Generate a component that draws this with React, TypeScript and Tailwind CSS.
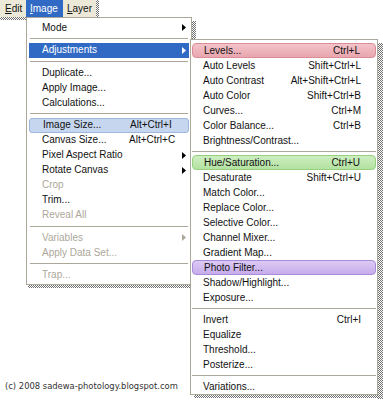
import React from "react";

type Row =
  | "sep"
  | {
      label: string;
      shortcut?: string;
      arrow?: boolean;
      disabled?: boolean;
      hl?: "blue" | "light" | "pink" | "green" | "purple";
    };

const menu1: Row[] = [
  { label: "Mode", arrow: true },
  "sep",
  { label: "Adjustments", arrow: true, hl: "blue" },
  "sep",
  { label: "Duplicate..." },
  { label: "Apply Image..." },
  { label: "Calculations..." },
  "sep",
  { label: "Image Size...", shortcut: "Alt+Ctrl+I", hl: "light" },
  { label: "Canvas Size...", shortcut: "Alt+Ctrl+C" },
  { label: "Pixel Aspect Ratio", arrow: true },
  { label: "Rotate Canvas", arrow: true },
  { label: "Crop", disabled: true },
  { label: "Trim..." },
  { label: "Reveal All", disabled: true },
  "sep",
  { label: "Variables", arrow: true, disabled: true },
  { label: "Apply Data Set...", disabled: true },
  "sep",
  { label: "Trap...", disabled: true },
];

const menu2: Row[] = [
  { label: "Levels...", shortcut: "Ctrl+L", hl: "pink" },
  { label: "Auto Levels", shortcut: "Shift+Ctrl+L" },
  { label: "Auto Contrast", shortcut: "Alt+Shift+Ctrl+L" },
  { label: "Auto Color", shortcut: "Shift+Ctrl+B" },
  { label: "Curves...", shortcut: "Ctrl+M" },
  { label: "Color Balance...", shortcut: "Ctrl+B" },
  { label: "Brightness/Contrast..." },
  "sep",
  { label: "Hue/Saturation...", shortcut: "Ctrl+U", hl: "green" },
  { label: "Desaturate", shortcut: "Shift+Ctrl+U" },
  { label: "Match Color..." },
  { label: "Replace Color..." },
  { label: "Selective Color..." },
  { label: "Channel Mixer..." },
  { label: "Gradient Map..." },
  { label: "Photo Filter...", hl: "purple" },
  { label: "Shadow/Highlight..." },
  { label: "Exposure..." },
  "sep",
  { label: "Invert", shortcut: "Ctrl+I" },
  { label: "Equalize" },
  { label: "Threshold..." },
  { label: "Posterize..." },
  "sep",
  { label: "Variations..." },
];

const hlClass: Record<string, string> = {
  blue: "bg-[#316ac5] text-white",
  light: "bg-[#c6d6ee] border border-[#9db7dd] rounded-[3px]",
  pink: "bg-[linear-gradient(#f3c3c9,#e9a6ae)] border border-[#d98d97] rounded-[4px]",
  green: "bg-[linear-gradient(#cdeec0,#b3e2a1)] border border-[#96d07f] rounded-[4px]",
  purple: "bg-[linear-gradient(#dccaf4,#c6acec)] border border-[#a98bd9] rounded-[4px]",
};

const checker =
  "bg-[image:repeating-conic-gradient(#6f6f6f_0%_25%,#ffffff_0%_50%)] bg-[length:2px_2px]";

function Arrow({ color }: { color: string }) {
  return (
    <svg width="4" height="7" viewBox="0 0 4 7" className="ml-auto shrink-0">
      <polygon points="0,0 4,3.5 0,7" fill={color} />
    </svg>
  );
}

function Menu1() {
  return (
    <div className="absolute left-[26px] top-[17px] w-[166px] bg-white border border-[#aca899] pt-[2px] pb-[1px]">
      <div className={`absolute -right-[5px] top-[3px] w-[4px] h-[22px] ${checker}`} />
      <div className={`absolute left-[1px] -bottom-[4px] w-[163px] h-[3px] ${checker}`} />
      {menu1.map((r, i) =>
        r === "sep" ? (
          <div key={i} className="h-[7.5px] flex items-center px-[3px]">
            <div className="h-px w-full bg-[#aca899]" />
          </div>
        ) : (
          <div
            key={i}
            className={`h-[15px] mx-[2px] pl-[13px] pr-[3px] flex items-center ${
              r.hl ? hlClass[r.hl] : ""
            } ${r.disabled ? "text-[#aca899]" : r.hl === "blue" ? "text-white" : "text-[#111]"}`}
          >
            <span className="w-[87px] shrink-0 whitespace-nowrap">{r.label}</span>
            {r.shortcut && <span className="whitespace-nowrap">{r.shortcut}</span>}
            {r.arrow && (
              <Arrow color={r.disabled ? "#aca899" : r.hl === "blue" ? "#ffffff" : "#000000"} />
            )}
          </div>
        )
      )}
    </div>
  );
}

function Menu2() {
  return (
    <div className="absolute left-[190px] top-[39px] w-[188px] bg-white border border-[#aca899] pt-[3px] pb-0">
      <div className={`absolute -right-[6px] top-[3px] w-[5px] h-[356px] ${checker}`} />
      <div className={`absolute left-[3px] -bottom-[4px] w-[188px] h-[3px] ${checker}`} />
      {menu2.map((r, i) =>
        r === "sep" ? (
          <div key={i} className="h-[7px] flex items-center px-[1px]">
            <div className="h-px w-[184px] bg-[#aca899]" />
          </div>
        ) : (
          <div
            key={i}
            className={`h-[15px] mx-[1px] w-[184px] pl-[11px] pr-[15px] flex items-center ${
              r.hl ? hlClass[r.hl] : ""
            } text-[#111]`}
          >
            <span className="whitespace-nowrap">{r.label}</span>
            {r.shortcut && <span className="ml-auto whitespace-nowrap">{r.shortcut}</span>}
          </div>
        )
      )}
    </div>
  );
}

export default function App() {
  return (
    <div className="relative w-[383px] h-[400px] bg-white overflow-hidden flex flex-col font-['Liberation_Sans',Arial,sans-serif] text-[10px] leading-none">
      <div className="relative flex">
        <div className="h-[17px] w-[96px] bg-[#ece9d8] flex items-stretch text-[#111]">
          <div className="pl-[5px] w-[26px] flex items-center">
            <span><span className="underline">E</span>dit</span>
          </div>
          <div className="w-[37px] bg-[#316ac5] text-white pl-[4px] flex items-center">
            <span><span className="underline">I</span>mage</span>
          </div>
          <div className="pl-[4px] flex items-center">
            <span><span className="underline">L</span>ayer</span>
          </div>
        </div>
        <div className={`w-[3px] h-[17px] ${checker}`} />
      </div>
      <div className={`w-[26px] h-[3px] ${checker}`} />
      <div className="flex-1" />
      <div className="pl-[5px] pb-[10px] text-[8.4px] text-[#333] font-['DejaVu_Sans',sans-serif]">
        (c) 2008 sadewa-photology.blogspot.com
      </div>
      <Menu1 />
      <Menu2 />
    </div>
  );
}
